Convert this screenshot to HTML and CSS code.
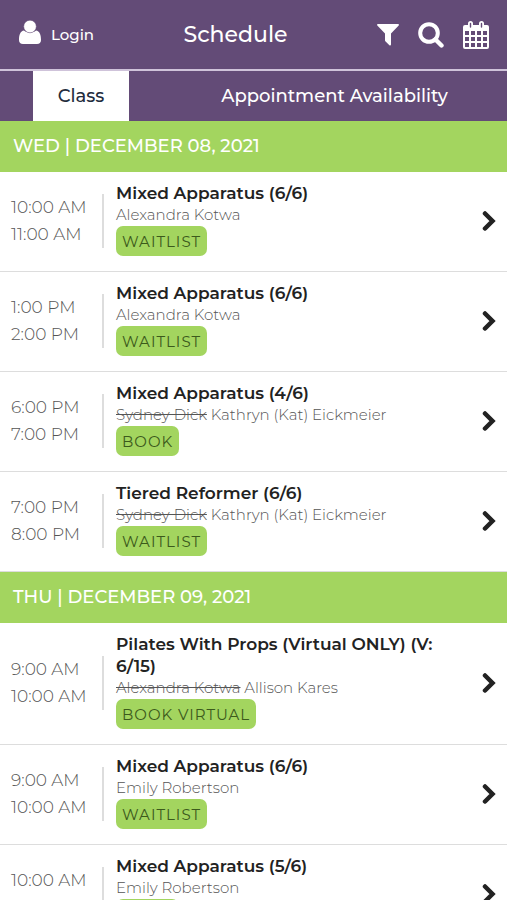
FILE: index.html
```html
<!DOCTYPE html>
<html lang="en">
<head>
    <meta charset="UTF-8">
    <meta name="viewport" content="width=device-width, initial-scale=1.0">
    <title>Schedule</title>
    <link rel="stylesheet" href="styles.css">
</head>
<body>
    <header class="header">
        <a href="#login" class="login">
            <svg class="user-icon" viewBox="0 0 22 24" width="22" height="24" aria-hidden="true">
                <path d="M5 10.500C1.500 11 0 14.500 0 20c0 2.500 1.500 4 4 4h14c2.500 0 4-1.500 4-4 0-5.500-1.500-9-5-9.500-3 2.800-9 2.800-12 0z"/>
                <circle cx="11" cy="6.500" r="6.300" stroke="#634b77" stroke-width=".5"/>
            </svg>
            <span>Login</span>
        </a>
        <h1 class="title">Schedule</h1>
        <div class="header-actions">
            <button class="icon-button" aria-label="Filter">
                <svg viewBox="0 0 22 22" width="22" height="22" aria-hidden="true">
                    <path d="M1 0h20c.9 0 1.300.9.700 1.500L14 9.500v11c0 .9-.9 1.300-1.600.7l-3.800-3.700c-.4-.4-.6-.8-.6-1.300V9.500L.3 1.500C-.3.900.1 0 1 0z"/>
                </svg>
            </button>
            <button class="icon-button" aria-label="Search">
                <svg viewBox="0 0 26 26" width="26" height="26" aria-hidden="true">
                    <circle cx="11" cy="11" r="8.800" fill="none" stroke="#fff" stroke-width="4"/>
                    <path d="M17.500 17.500l6 6" fill="none" stroke="#fff" stroke-width="4.400" stroke-linecap="round"/>
                </svg>
            </button>
            <button class="icon-button" aria-label="Calendar">
                <svg viewBox="0 0 26 28" width="26" height="28" aria-hidden="true">
                    <path fill-rule="evenodd" d="M2 4h22a2 2 0 0 1 2 2v20a2 2 0 0 1-2 2H2a2 2 0 0 1-2-2V6a2 2 0 0 1 2-2zM2 10v4h4v-4zM8 10v4h4v-4zM14 10v4h4v-4zM20 10v4h4v-4zM2 16v4h4v-4zM8 16v4h4v-4zM14 16v4h4v-4zM20 16v4h4v-4zM2 22v4h4v-4zM8 22v4h4v-4zM14 22v4h4v-4zM20 22v4h4v-4z"/>
                    <rect x="5" y="0" width="5" height="8" rx="2.500"/>
                    <rect x="16" y="0" width="5" height="8" rx="2.500"/>
                    <path d="M7.500 2.500v3.500M18.500 2.500v3.500" stroke="#634b77" stroke-width="1.400" stroke-linecap="round"/>
                </svg>
            </button>
        </div>
    </header>

    <nav class="tabs">
        <a href="#class" class="tab active">Class</a>
        <div class="tab-wide">
            <a href="#appointments" class="tab">Appointment Availability</a>
        </div>
    </nav>

    <main>
        <section class="day">
            <h2 class="day-title">WED | DECEMBER 08, 2021</h2>
            <article class="class-row">
                <div class="times"><time>10:00 AM</time><time>11:00 AM</time></div>
                <div class="details">
                    <h3 class="class-name">Mixed Apparatus (6/6)</h3>
                    <p class="teacher">Alexandra Kotwa</p>
                    <button class="book-button">WAITLIST</button>
                </div>
                <a href="#class-1" class="arrow" aria-label="Class details"><svg viewBox="0 0 14 20" width="14" height="20"><path d="M3 2.500L10.500 10 3 17.500"/></svg></a>
            </article>
            <article class="class-row">
                <div class="times"><time>1:00 PM</time><time>2:00 PM</time></div>
                <div class="details">
                    <h3 class="class-name">Mixed Apparatus (6/6)</h3>
                    <p class="teacher">Alexandra Kotwa</p>
                    <button class="book-button">WAITLIST</button>
                </div>
                <a href="#class-2" class="arrow" aria-label="Class details"><svg viewBox="0 0 14 20" width="14" height="20"><path d="M3 2.500L10.500 10 3 17.500"/></svg></a>
            </article>
            <article class="class-row">
                <div class="times"><time>6:00 PM</time><time>7:00 PM</time></div>
                <div class="details">
                    <h3 class="class-name">Mixed Apparatus (4/6)</h3>
                    <p class="teacher"><s>Sydney Dick</s> Kathryn (Kat) Eickmeier</p>
                    <button class="book-button">BOOK</button>
                </div>
                <a href="#class-3" class="arrow" aria-label="Class details"><svg viewBox="0 0 14 20" width="14" height="20"><path d="M3 2.500L10.500 10 3 17.500"/></svg></a>
            </article>
            <article class="class-row">
                <div class="times"><time>7:00 PM</time><time>8:00 PM</time></div>
                <div class="details">
                    <h3 class="class-name">Tiered Reformer (6/6)</h3>
                    <p class="teacher"><s>Sydney Dick</s> Kathryn (Kat) Eickmeier</p>
                    <button class="book-button">WAITLIST</button>
                </div>
                <a href="#class-4" class="arrow" aria-label="Class details"><svg viewBox="0 0 14 20" width="14" height="20"><path d="M3 2.500L10.500 10 3 17.500"/></svg></a>
            </article>
        </section>

        <section class="day">
            <h2 class="day-title">THU | DECEMBER 09, 2021</h2>
            <article class="class-row">
                <div class="times"><time>9:00 AM</time><time>10:00 AM</time></div>
                <div class="details">
                    <h3 class="class-name">Pilates With Props (Virtual ONLY) (V: 6/15)</h3>
                    <p class="teacher"><s>Alexandra Kotwa</s> Allison Kares</p>
                    <button class="book-button">BOOK VIRTUAL</button>
                </div>
                <a href="#class-5" class="arrow" aria-label="Class details"><svg viewBox="0 0 14 20" width="14" height="20"><path d="M3 2.500L10.500 10 3 17.500"/></svg></a>
            </article>
            <article class="class-row">
                <div class="times"><time>9:00 AM</time><time>10:00 AM</time></div>
                <div class="details">
                    <h3 class="class-name">Mixed Apparatus (6/6)</h3>
                    <p class="teacher">Emily Robertson</p>
                    <button class="book-button">WAITLIST</button>
                </div>
                <a href="#class-6" class="arrow" aria-label="Class details"><svg viewBox="0 0 14 20" width="14" height="20"><path d="M3 2.500L10.500 10 3 17.500"/></svg></a>
            </article>
            <article class="class-row">
                <div class="times"><time>10:00 AM</time><time>11:00 AM</time></div>
                <div class="details">
                    <h3 class="class-name">Mixed Apparatus (5/6)</h3>
                    <p class="teacher">Emily Robertson</p>
                    <button class="book-button">BOOK</button>
                </div>
                <a href="#class-7" class="arrow" aria-label="Class details"><svg viewBox="0 0 14 20" width="14" height="20"><path d="M3 2.500L10.500 10 3 17.500"/></svg></a>
            </article>
        </section>
    </main>
</body>
</html>
```
FILE: styles.css
```css
* {
    box-sizing: border-box;
}
html {
    scrollbar-width: none;
}
body {
    margin: 0;
    font-family: Montserrat, Inter, sans-serif;
    background-color: #fff;
    color: #222;
}
h1, h2, h3, p {
    margin: 0;
}
a {
    color: inherit;
    text-decoration: none;
}
button {
    font-family: inherit;
    border: none;
    cursor: pointer;
}
svg {
    display: block;
    fill: #fff;
}

/* top bar */
.header {
    display: flex;
    justify-content: space-between;
    align-items: center;
    height: 71px;
    padding: 0 18px 0 19px;
    background-color: #634b77;
    border-bottom: 2px solid #cfc3da;
    color: #fff;
}
.login {
    display: flex;
    align-items: center;
    gap: 10px;
    font-size: 15px;
    font-weight: 500;
}
.user-icon {
    margin-bottom: 6px;
}
.title {
    font-size: 22px;
    font-weight: 500;
}
.header-actions {
    display: flex;
    align-items: center;
    gap: 19px;
}
.icon-button {
    padding: 0;
    background: none;
}

/* tabs */
.tabs {
    display: flex;
    height: 50px;
    padding-left: 33px;
    background-color: #634b77;
    color: #fff;
    font-size: 18px;
    font-weight: 500;
    line-height: 50px;
}
.tab.active {
    width: 96px;
    text-align: center;
    background-color: #fff;
    color: #232c3d;
}
.tab-wide {
    flex: 1;
    padding-left: 33px;
    text-align: center;
}

/* schedule list */
.day-title {
    padding: 0 13px;
    background-color: #a3d55f;
    color: #fff;
    font-size: 18px;
    font-weight: 500;
    line-height: 51px;
}
.class-row {
    display: flex;
    align-items: center;
    padding: 10px 11px 15px 11px;
    border-bottom: 1px solid #ddd;
}
.times {
    width: 93px;
    margin-top: 4px;
    border-right: 2px solid #ddd;
    color: #555;
    font-size: 17px;
    font-weight: 300;
    line-height: 27px;
}
.times time {
    display: block;
}
.details {
    flex: 1;
    padding-left: 12px;
    padding-right: 24px;
}
.class-name {
    font-size: 17px;
    font-weight: 600;
    line-height: 22px;
}
.teacher {
    color: #555;
    font-size: 15px;
    font-weight: 300;
    line-height: 22px;
}
.book-button {
    display: block;
    height: 30px;
    padding: 0 6px;
    background-color: #a3d55f;
    border-radius: 7px;
    color: #3c5a1c;
    font-size: 15px;
    font-weight: 400;
    letter-spacing: 1px;
}
.arrow {
    margin-top: 4px;
}
.arrow svg {
    fill: none;
    stroke: #222;
    stroke-width: 4.5;
    stroke-linecap: round;
}
```
